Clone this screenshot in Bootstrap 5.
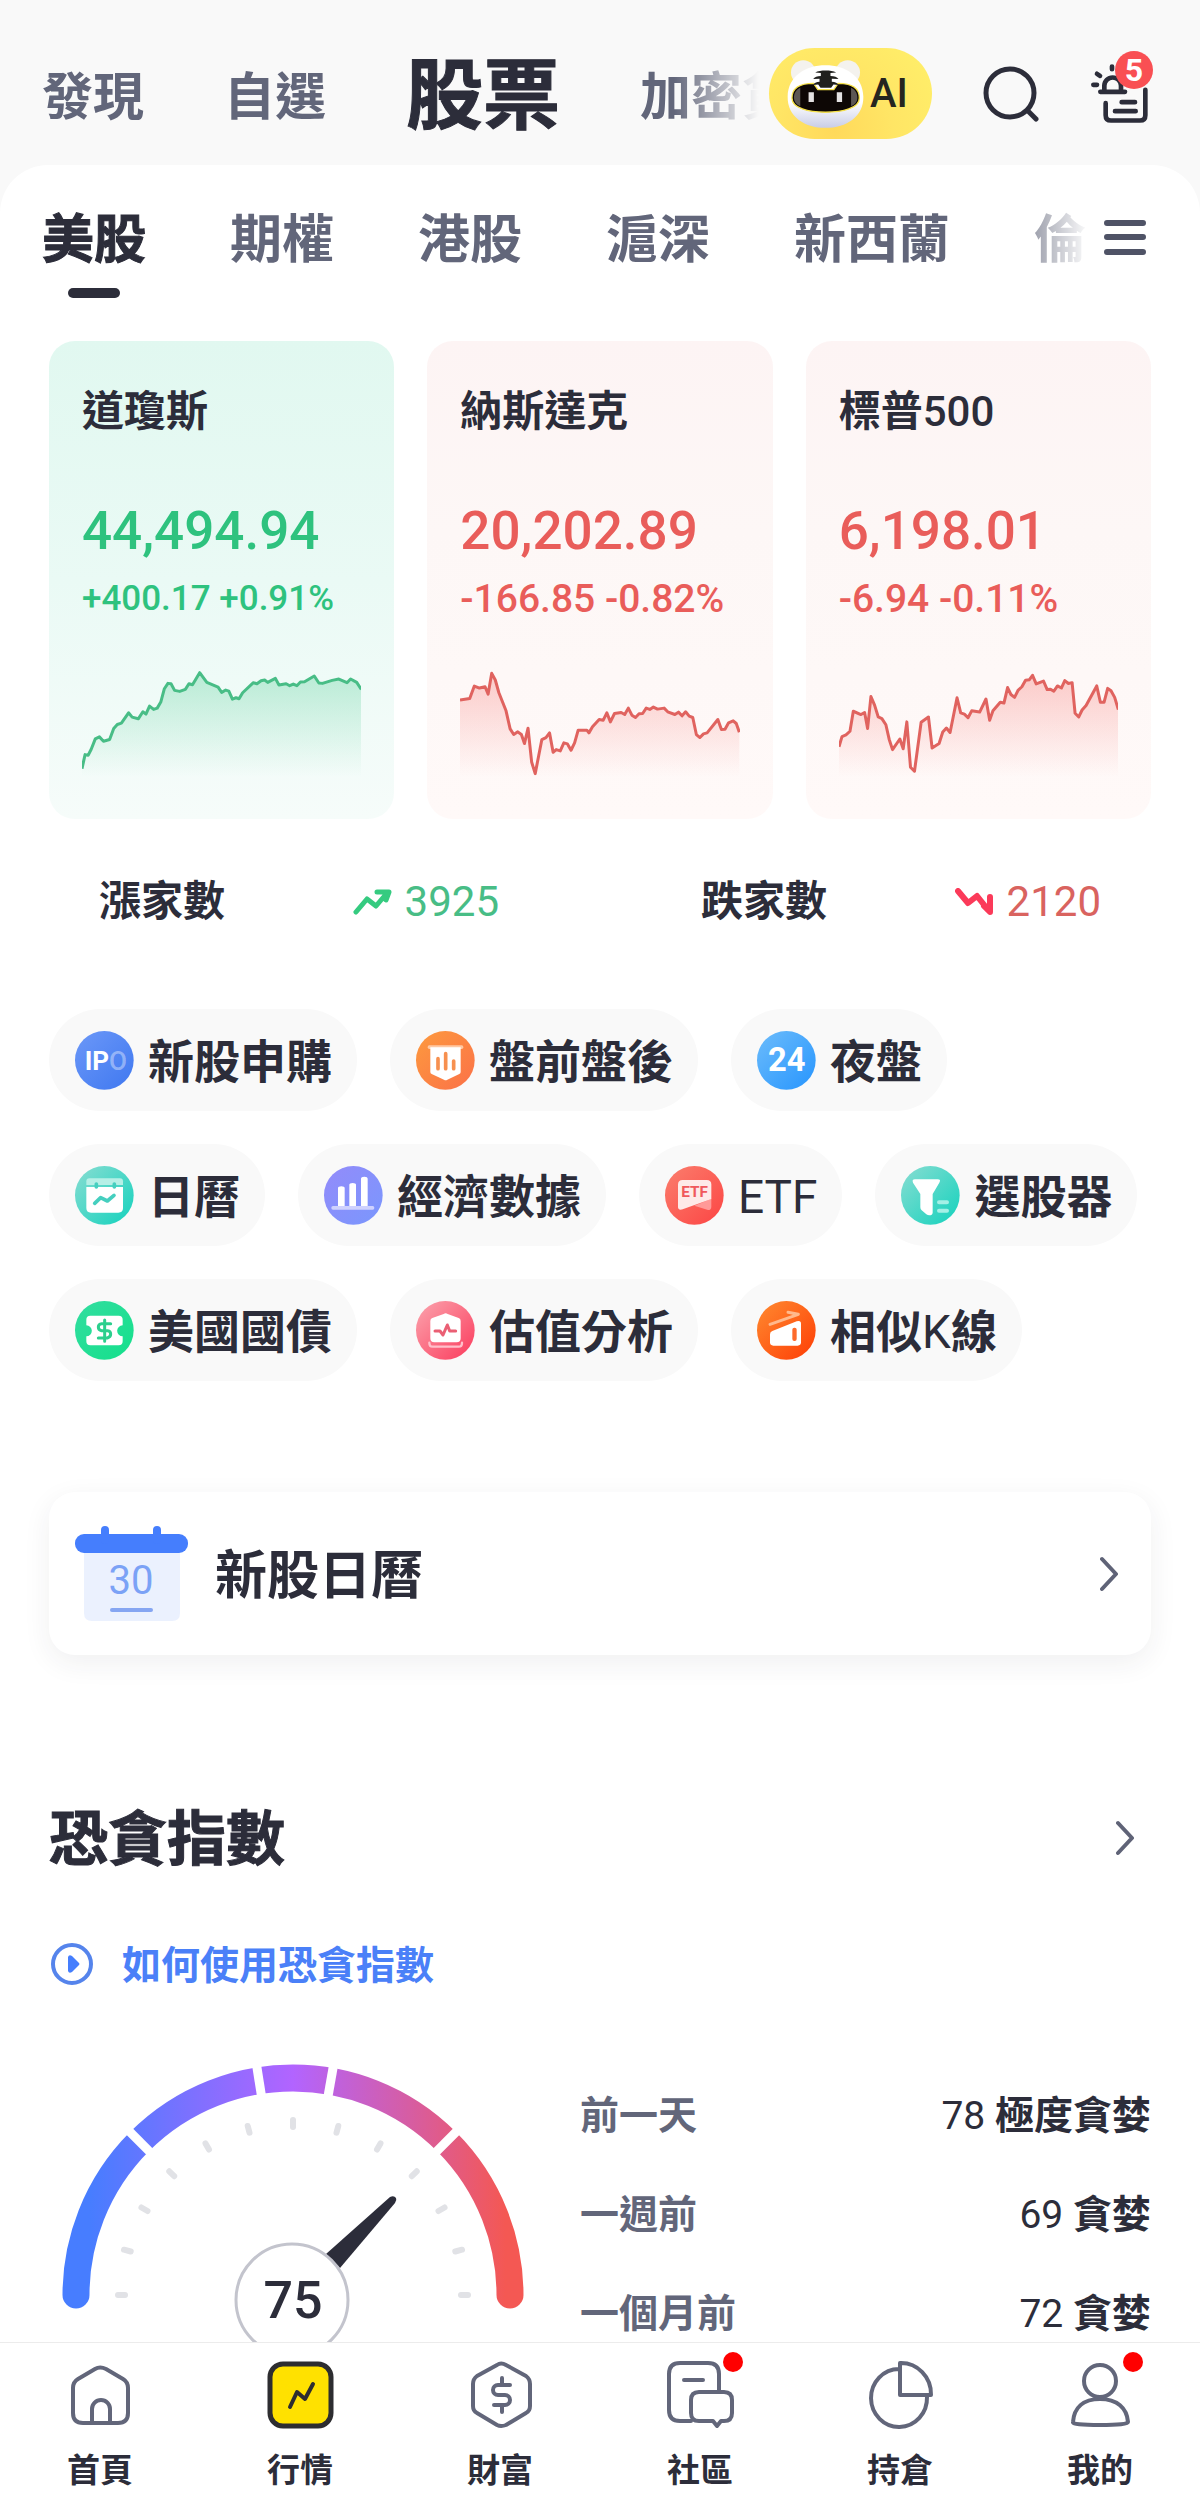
<!DOCTYPE html>
<html lang="zh-Hant">
<head>
<meta charset="utf-8">
<meta name="viewport" content="width=device-width, initial-scale=1">
<title>股票行情</title>
<link href="https://cdn.jsdelivr.net/npm/bootstrap@5.3.0/dist/css/bootstrap.min.css" rel="stylesheet">
<style>
  :root { --ink: #2c2d3a; --soft: #62667a; --up: #2ec27e; --down: #e95d5a; --blue: #4a80f8; }
  body { background: #f9f9f9; color: var(--ink); font-family: Roboto, "Noto Sans CJK TC", sans-serif; font-weight: 700; }
  a { color: inherit; text-decoration: none; }
  svg { display: block; flex: none; }
  .line { fill: none; stroke-linecap: round; stroke-linejoin: round; }
  .latin { font-weight: 400; }
  .latin-medium { font-weight: 500; }
  .heavy { -webkit-text-stroke: 1px currentColor; }

  .top-bar { padding: 48px 51px 26px 42px; gap: 51px; }
  .top-scroll { gap: 80px; font-size: 51px; line-height: 83px; padding-top: 8px; color: var(--soft); margin-right: -51px;
    -webkit-mask-image: linear-gradient(to right, #000 calc(100% - 95px), transparent calc(100% - 10px)); mask-image: linear-gradient(to right, #000 calc(100% - 95px), transparent calc(100% - 10px)); }
  .top-scroll .current { font-size: 77px; color: var(--ink); }
  .ai-pill { height: 91px; width: 163px; padding: 0 0 0 18px; gap: 6px; border: 0; border-radius: 46px; font-size: 40px; font-weight: 500; color: #26251f;
    background: radial-gradient(circle at 40% 90%, #ffd95a 0, #ffe565 45%, #fff06a 100%); }
  .plain-btn { border: 0; background: none; padding: 0; }
  .count-badge { position: absolute; left: 24px; top: -12px; width: 38px; height: 38px; border-radius: 50%; background: #f94f53; color: #fff; font-size: 32px; font-weight: 700; line-height: 38px; text-align: center; }

  .sheet { background: #fff; border-radius: 48px 48px 0 0; padding-bottom: 150px; }
  .tab-row { padding: 38px 54px 43px 42px; }
  .tab-scroll { gap: 84px; font-size: 52px; line-height: 70px; padding-top: 3px; color: var(--soft);
    -webkit-mask-image: linear-gradient(to right, #000 calc(100% - 105px), transparent calc(100% - 14px)); mask-image: linear-gradient(to right, #000 calc(100% - 105px), transparent calc(100% - 14px)); }
  .tab-scroll .current { color: var(--ink); }
  .tab-scroll .current::after { content: ""; display: block; width: 52px; height: 10px; border-radius: 5px; background: var(--ink); margin: 12px auto 0; }
  .menu-btn { height: 70px; }

  .page-pad { padding: 0 49px; }
  .index-row { gap: 33px; }
  .index-card { flex: 1 1 0; min-width: 0; border-radius: 26px; padding: 42px 33px; }
  .index-card.rise { background: linear-gradient(#e1f8f0, #eafaf5 50%, #f6fcfa); color: var(--up); }
  .index-card.fall { background: linear-gradient(#fdf4f4, #fdf7f6 40%, #fff9f8); color: var(--down); }
  .index-name { font-size: 42px; line-height: 58px; color: var(--ink); }
  .index-value { font-size: 53px; line-height: 64px; font-weight: 500; margin-top: 58px; }
  .index-change { font-size: 39px; line-height: 48px; font-weight: 500; margin-top: 12px; white-space: nowrap; }
  .rise .index-change { font-size: 35px; }
  .spark { width: 100%; height: 107px; margin-top: 47px; }
  .spark .stroke { fill: none; stroke-width: 3; vector-effect: non-scaling-stroke; stroke-linejoin: round; }

  .breadth { margin-top: 59px; padding: 0 50px; gap: 202px; font-size: 42px; line-height: 48px; }
  .breadth .num { gap: 13px; font-weight: 400; }

  .chips { margin-top: 83px; gap: 33px; }
  .chip { height: 102px; border-radius: 51px; background: #f9f9f9; padding: 0 25px 0 26px; gap: 14px; font-size: 46px; line-height: 60px; }
  .chip > span { padding-top: 4px; }

  .calendar-card { margin-top: 111px; height: 163px; border-radius: 26px; background: #fff; box-shadow: 0 8px 28px rgba(40, 40, 60, .07); padding: 0 33px 0 26px; font-size: 52px; gap: 26px; }
  .calendar-card > span { padding-top: 6px; }
  .section-head { margin-top: 143px; padding-right: 17px; }
  .section-head h2 { font-size: 59px; line-height: 76px; padding-top: 4px; font-weight: 700; }
  .how-to { margin-top: 58px; gap: 29px; font-size: 39px; line-height: 56px; color: var(--blue); padding-left: 2px; }
  .how-to > span { padding-top: 2px; margin-bottom: -2px; }

  .gauge-row { margin-top: 68px; }
  .gauge { width: 490px; margin-right: 41px; }
  .history { margin: 6px 0 0; font-size: 39px; line-height: 48px; }
  .history th, .history td { height: 99px; padding: 0; vertical-align: middle; }
  .history th { color: var(--soft); font-weight: 700; }

  .dock { height: 170px; background: #fff; border-top: 1px solid #ececec; padding-top: 17px; font-size: 33px; line-height: 40px; }
  .dock a { flex: 1 1 0; gap: 23px; }
  .dock svg { width: 68px; height: 68px; overflow: visible; stroke: var(--soft); stroke-width: 4; }
  .red-dot { position: absolute; left: 57px; top: -8px; width: 20px; height: 20px; border-radius: 50%; background: #f00; }
</style>
</head>
<body>

<header class="top-bar d-flex align-items-center">
  <nav class="top-scroll d-flex flex-fill overflow-hidden text-nowrap" style="min-width:0" aria-label="主分類">
    <a href="#">發現</a><a href="#">自選</a><a href="#" class="current heavy" aria-current="page">股票</a><a href="#">加密貨</a>
  </nav>
  <button class="ai-pill d-flex align-items-center flex-shrink-0" type="button">
    <svg width="77" height="70" viewBox="145 90 232 210" aria-hidden="true">
      <defs>
        <linearGradient id="furr" x1="0" y1="0" x2="0" y2="1"><stop offset=".6" stop-color="#fff"/><stop offset="1" stop-color="#c9cde6"/></linearGradient>
      </defs>
      <circle cx="194" cy="130" r="37" fill="#f4f2ee"/><circle cx="328" cy="130" r="37" fill="#f4f2ee"/>
      <path d="M261 108C320 108 374 140 375 203C376 262 325 297 261 297S146 262 147 203C148 140 202 108 261 108Z" fill="url(#furr)"/>
      <path d="M160 207C160 176 182 163 225 163L238 182H286L299 163C344 163 363 178 363 207C363 238 312 250 261 250S160 238 160 207Z" fill="#0d0705" stroke="#f6e24a" stroke-width="4"/>
      <path d="M166 207C166 190 174 181 185 176V232C172 226 166 218 166 207ZM357 207C357 190 349 181 338 176V232C351 226 357 218 357 207Z" fill="#5c5754"/>
      <path d="M230 130C245 122 278 122 293 130L276 132V141C288 141 296 144 300 150L280 149V158C290 158 298 162 301 168L285 166L278 176H246L239 166L223 168C226 162 234 158 243 158V149L224 150C228 144 236 141 247 141V132Z" fill="#20201e"/>
      <path d="M210 190h16v29h-16zM295 190h16v29h-16z" fill="#e4e2e2"/>
    </svg>
    <span>AI</span>
  </button>
  <button class="plain-btn flex-shrink-0" type="button" aria-label="搜尋">
    <svg width="57" height="57" viewBox="0 0 57 57" class="line" stroke="#2c2d3a" stroke-width="5"><circle cx="27" cy="28" r="24"/><path d="M45 46L53 54"/></svg>
  </button>
  <button class="plain-btn position-relative flex-shrink-0" type="button" aria-label="早報">
    <svg width="58" height="61" viewBox="1056 100 174 182" class="line" stroke="#2c2d3a" stroke-width="14"><path d="M1100 220V256Q1100 272 1116 272H1203Q1219 272 1219 256V180M1148 217H1188M1128 244H1190M1084 186H1158M1096 184V168A25 25 0 0 1 1146 168V184M1063 165H1074M1074 132L1083 138M1119 110V118"/></svg>
    <span class="count-badge">5</span>
  </button>
</header>

<main class="sheet">
  <div class="tab-row d-flex align-items-start">
    <nav class="tab-scroll d-flex flex-fill overflow-hidden text-nowrap" style="min-width:0" aria-label="市場">
      <a href="#" class="current heavy" aria-current="page">美股</a><a href="#">期權</a><a href="#">港股</a><a href="#">滬深</a><a href="#">新西蘭</a><a href="#">倫</a>
    </nav>
    <button class="plain-btn menu-btn d-flex align-items-center flex-shrink-0" type="button" aria-label="選單">
      <svg width="42" height="36" viewBox="0 0 42 36" class="line" stroke="#4f5366" stroke-width="6"><path d="M3 3H39M3 17H39M3 32H39"/></svg>
    </button>
  </div>

  <div class="page-pad">
    <section class="index-row d-flex" aria-label="指數">
      <a href="#" class="index-card rise">
        <div class="index-name">道瓊斯</div>
        <div class="index-value">44,494.94</div>
        <div class="index-change">+400.17 +0.91%</div>
        <svg class="spark" viewBox="162 1050 546 320" preserveAspectRatio="none" aria-hidden="true">
          <defs><linearGradient id="gUp" x1="0" y1="0" x2="0" y2="1"><stop stop-color="#2ec27e" stop-opacity=".28"/><stop offset="1" stop-color="#2ec27e" stop-opacity="0"/></linearGradient></defs>
          <path fill="url(#gUp)" d="M162 1345L168 1303L174 1305L180 1287L188 1256L196 1250L204 1263L216 1258L224 1225L231 1213L239 1209L253 1178L260 1191L272 1196L281 1175L287 1182L294 1158L302 1168L309 1164L316 1146L323 1106L330 1090L336 1091L343 1111L353 1114L364 1108L371 1091L378 1094L392 1058L406 1087L428 1101L435 1117L443 1110L449 1113L456 1137L463 1133L469 1136L476 1118L497 1088L504 1091L512 1082L519 1080L525 1087L540 1075L547 1095L561 1091L568 1097L575 1092L582 1097L589 1086L597 1085L616 1068L625 1089L632 1090L651 1081L664 1077L680 1088L687 1077L699 1087L708 1108V1370H162Z"/>
          <path class="stroke" stroke="#48bd86" d="M162 1345L168 1303L174 1305L180 1287L188 1256L196 1250L204 1263L216 1258L224 1225L231 1213L239 1209L253 1178L260 1191L272 1196L281 1175L287 1182L294 1158L302 1168L309 1164L316 1146L323 1106L330 1090L336 1091L343 1111L353 1114L364 1108L371 1091L378 1094L392 1058L406 1087L428 1101L435 1117L443 1110L449 1113L456 1137L463 1133L469 1136L476 1118L497 1088L504 1091L512 1082L519 1080L525 1087L540 1075L547 1095L561 1091L568 1097L575 1092L582 1097L589 1086L597 1085L616 1068L625 1089L632 1090L651 1081L664 1077L680 1088L687 1077L699 1087L708 1108"/>
        </svg>
      </a>
      <a href="#" class="index-card fall">
        <div class="index-name">納斯達克</div>
        <div class="index-value">20,202.89</div>
        <div class="index-change">-166.85 -0.82%</div>
        <svg class="spark" viewBox="902 1050 546 320" preserveAspectRatio="none" aria-hidden="true">
          <defs><linearGradient id="gDown" x1="0" y1="0" x2="0" y2="1"><stop stop-color="#f4605c" stop-opacity=".3"/><stop offset="1" stop-color="#f4605c" stop-opacity="0"/></linearGradient></defs>
          <path fill="url(#gDown)" d="M902 1140L921 1135L930 1098L940 1104L951 1100L957 1122L964 1060L971 1080L978 1118L992 1172L1000 1226L1007 1243L1015 1235L1022 1243L1028 1270L1035 1224L1042 1325L1049 1360L1056 1305L1062 1258L1070 1252L1077 1238L1084 1296L1090 1288L1098 1292L1105 1268L1112 1271L1119 1290L1126 1268L1133 1230L1150 1230L1154 1238L1161 1220L1174 1198L1182 1200L1189 1178L1196 1205L1204 1180L1217 1177L1224 1183L1231 1164L1238 1185L1245 1192L1252 1181L1259 1180L1266 1164L1273 1168L1280 1161L1288 1167L1301 1164L1308 1175L1322 1183L1329 1176L1336 1187L1343 1175L1350 1188L1357 1192L1364 1243L1371 1252L1378 1241L1385 1238L1406 1198L1413 1228L1420 1227L1427 1208L1436 1202L1442 1210L1448 1236V1370H902Z"/>
          <path class="stroke" stroke="#e0635f" d="M902 1140L921 1135L930 1098L940 1104L951 1100L957 1122L964 1060L971 1080L978 1118L992 1172L1000 1226L1007 1243L1015 1235L1022 1243L1028 1270L1035 1224L1042 1325L1049 1360L1056 1305L1062 1258L1070 1252L1077 1238L1084 1296L1090 1288L1098 1292L1105 1268L1112 1271L1119 1290L1126 1268L1133 1230L1150 1230L1154 1238L1161 1220L1174 1198L1182 1200L1189 1178L1196 1205L1204 1180L1217 1177L1224 1183L1231 1164L1238 1185L1245 1192L1252 1181L1259 1180L1266 1164L1273 1168L1280 1161L1288 1167L1301 1164L1308 1175L1322 1183L1329 1176L1336 1187L1343 1175L1350 1188L1357 1192L1364 1243L1371 1252L1378 1241L1385 1238L1406 1198L1413 1228L1420 1227L1427 1208L1436 1202L1442 1210L1448 1236"/>
        </svg>
      </a>
      <a href="#" class="index-card fall">
        <div class="index-name">標普<span class="latin-medium">500</span></div>
        <div class="index-value">6,198.01</div>
        <div class="index-change">-6.94 -0.11%</div>
        <svg class="spark" viewBox="174 857 840 262" preserveAspectRatio="none" aria-hidden="true">
          <path fill="url(#gDown)" d="M174 1045L183 1020L195 1016L207 1007L217 958L240 966L251 961L260 1000L270 922L281 943L292 972L303 976L315 991L325 1027L335 1052L357 1026L367 1050L378 984L389 1095L401 1105L411 1045L421 985L443 972L454 1048L475 1037L486 1009L497 999L508 1010L529 925L540 962L551 965L562 974L573 957L597 960L616 928L627 980L637 957L659 936L670 938L681 900L691 917L702 924L713 906L724 898L735 882L746 881L756 870L767 891L789 884L800 905L810 904L820 909L831 896L843 901L853 883L864 890L875 888L884 963L895 972L905 955L917 944L949 896L960 936L971 936L982 902L992 908L1003 924L1014 954V1119H174Z"/>
          <path class="stroke" stroke="#e0635f" d="M174 1045L183 1020L195 1016L207 1007L217 958L240 966L251 961L260 1000L270 922L281 943L292 972L303 976L315 991L325 1027L335 1052L357 1026L367 1050L378 984L389 1095L401 1105L411 1045L421 985L443 972L454 1048L475 1037L486 1009L497 999L508 1010L529 925L540 962L551 965L562 974L573 957L597 960L616 928L627 980L637 957L659 936L670 938L681 900L691 917L702 924L713 906L724 898L735 882L746 881L756 870L767 891L789 884L800 905L810 904L820 909L831 896L843 901L853 883L864 890L875 888L884 963L895 972L905 955L917 944L949 896L960 936L971 936L982 902L992 908L1003 924L1014 954"/>
        </svg>
      </a>
    </section>

    <section class="breadth d-flex" aria-label="漲跌家數">
      <div class="d-flex flex-fill justify-content-between align-items-center">
        <span>漲家數</span>
        <span class="num d-flex align-items-center" style="color:#48bd86"><svg width="39" height="26" viewBox="0 0 39 26" class="line" stroke="#35cb80" stroke-width="5"><path d="M3 23L14 10L23 17L34 4M24 3H36L33 11"/></svg>3925</span>
      </div>
      <div class="d-flex flex-fill justify-content-between align-items-center">
        <span>跌家數</span>
        <span class="num d-flex align-items-center" style="color:#d9635f"><svg width="39" height="28" viewBox="0 0 39 28" class="line" stroke="#fb3a59" stroke-width="6"><path d="M3 3L13 15L22 8L34 23M35 9V24L29 18"/></svg>2120</span>
      </div>
    </section>

    <nav class="chips d-flex flex-wrap" aria-label="工具">
      <a href="#" class="chip d-flex align-items-center">
        <svg width="59" height="59" viewBox="0 0 177 177"><defs><linearGradient id="c1" x1="0" y1="0" x2="1" y2="1"><stop stop-color="#6c98f8"/><stop offset="1" stop-color="#3f78f0"/></linearGradient></defs><circle cx="88" cy="88" r="88" fill="url(#c1)"/><text x="29" y="116" font-size="78" font-weight="700" fill="#fff">IP<tspan font-weight="500" fill-opacity=".4">O</tspan></text></svg><span>新股申購</span></a>
      <a href="#" class="chip d-flex align-items-center">
        <svg width="59" height="59" viewBox="0 0 177 177"><defs><linearGradient id="c2" x1="0" y1="0" x2="1" y2="1"><stop stop-color="#fd9a3e"/><stop offset="1" stop-color="#fb7148"/></linearGradient></defs><circle cx="88" cy="88" r="88" fill="url(#c2)"/><rect x="35" y="43" width="107" height="11" rx="5" fill="#ffc9a3"/><path d="M43 49H134V123Q134 127 130 129L94 146Q89 149 84 146L47 129Q43 127 43 123Z" fill="#fff"/><path d="M66 83V113M89 68V113M113 90V113" class="line" stroke="#f7904f" stroke-width="11"/></svg><span>盤前盤後</span></a>
      <a href="#" class="chip d-flex align-items-center">
        <svg width="59" height="59" viewBox="0 0 177 177"><defs><linearGradient id="c3" x1="0" y1="0" x2="1" y2="1"><stop stop-color="#6cbcfb"/><stop offset="1" stop-color="#2795fe"/></linearGradient></defs><circle cx="88" cy="88" r="88" fill="url(#c3)"/><text x="89" y="120" font-size="98" font-weight="700" text-anchor="middle" fill="#fff">24</text></svg><span>夜盤</span></a>
      <a href="#" class="chip d-flex align-items-center">
        <svg width="59" height="59" viewBox="0 0 177 177"><defs><linearGradient id="c4" x1="0" y1="0" x2="1" y2="1"><stop offset=".1" stop-color="#7ddcd0"/><stop offset=".9" stop-color="#1fd3bf"/></linearGradient></defs><circle cx="88" cy="88" r="88" fill="url(#c4)"/><path d="M34 57V46Q34 37 43 37H135Q144 37 144 46V57Z" fill="#b6efe6"/><path d="M34 63H144V126Q144 140 130 140H48Q34 140 34 126Z" fill="#fff"/><path d="M64 54V63M118 54V63M59 112L77 95L97 105L117 88" class="line" stroke="#45cfbf" stroke-width="11"/></svg><span>日曆</span></a>
      <a href="#" class="chip d-flex align-items-center">
        <svg width="59" height="59" viewBox="0 0 177 177"><defs><linearGradient id="c5" x1="0" y1="0" x2="1" y2="1"><stop stop-color="#938bfa"/><stop offset="1" stop-color="#7a97fd"/></linearGradient></defs><circle cx="88" cy="88" r="88" fill="url(#c5)"/><path d="M42 122V66Q42 61 52 61T62 66V122ZM76 122V56Q76 51 86 51T96 56V122ZM111 122V38Q111 32 121 32T131 38V122Z" fill="#fff"/><rect x="22" y="120" width="129" height="11" rx="5" fill="#cfd2fe"/></svg><span>經濟數據</span></a>
      <a href="#" class="chip d-flex align-items-center">
        <svg width="59" height="59" viewBox="0 0 177 177"><defs><linearGradient id="c6" x1="0" y1="0" x2="1" y2="1"><stop stop-color="#fb7e6d"/><stop offset="1" stop-color="#fc4544"/></linearGradient></defs><circle cx="88" cy="88" r="88" fill="url(#c6)"/><path d="M88 119L139 98V122Q139 132 129 132Z" fill="#ff9a98"/><path d="M39 56Q39 42 53 42H125Q139 42 139 56V99L53 130Q39 134 39 122Z" fill="#feeae8"/><text x="89" y="93" font-size="46" font-weight="700" text-anchor="middle" fill="#f0595c">ETF</text></svg><span class="latin">ETF</span></a>
      <a href="#" class="chip d-flex align-items-center">
        <svg width="59" height="59" viewBox="0 0 177 177"><circle cx="88" cy="88" r="88" fill="url(#c4)"/><path d="M42 40H110Q121 40 115 50L95 84V140Q94 148 85 148Q80 148 76 145L62 133Q58 130 58 124V84L36 50Q32 40 42 40Z" fill="#fff"/><path d="M114 109H138M114 134H138" class="line" stroke="#a4f0e6" stroke-width="12"/></svg><span>選股器</span></a>
      <a href="#" class="chip d-flex align-items-center">
        <svg width="59" height="59" viewBox="0 0 177 177"><defs><linearGradient id="c8" x1="0" y1="0" x2="1" y2="1"><stop stop-color="#33dda0"/><stop offset="1" stop-color="#14e08b"/></linearGradient></defs><circle cx="88" cy="88" r="88" fill="url(#c8)"/><path d="M46 44H131Q143 44 143 56V73A16 16 0 0 0 143 106V121Q143 133 131 133H46Q34 133 34 121V106A16 16 0 0 0 34 73V56Q34 44 46 44Z" fill="#fff"/><path d="M107 68H80Q70 69 70 78T80 89H98Q107 90 107 99T97 111H70M89 57V121" class="line" stroke="#2ccf8d" stroke-width="9"/></svg><span>美國國債</span></a>
      <a href="#" class="chip d-flex align-items-center">
        <svg width="59" height="59" viewBox="0 0 177 177"><defs><linearGradient id="c9" x1="0" y1="0" x2="1" y2="1"><stop offset=".1" stop-color="#fb9aa6"/><stop offset="1" stop-color="#fb3b5c"/></linearGradient></defs><circle cx="88" cy="88" r="88" fill="url(#c9)"/><path d="M83 39Q89 35 95 39L128 51Q134 53 134 60V112Q134 124 122 124H55Q43 124 43 112V60Q43 53 49 51Z" fill="#fff"/><path d="M40 125Q40 137 50 137H128Q138 137 138 125" class="line" stroke="#ffc0ca" stroke-width="7"/><path d="M57 90H72L81 102L94 72L101 90H119" class="line" stroke="#ea5f74" stroke-width="9"/></svg><span>估值分析</span></a>
      <a href="#" class="chip d-flex align-items-center">
        <svg width="59" height="59" viewBox="0 0 177 177"><defs><linearGradient id="c10" x1="0" y1="0" x2="1" y2="1"><stop stop-color="#ff8a30"/><stop offset="1" stop-color="#fe3d05"/></linearGradient></defs><circle cx="88" cy="88" r="88" fill="url(#c10)"/><path d="M39 70L124 40L93 34" class="line" stroke="#ffb98c" stroke-width="9"/><path d="M46 90L119 61Q132 57 132 68V124Q132 134 122 134H49Q39 134 39 124V100Q39 93 46 90Z" fill="#fff"/><rect x="106" y="80" width="13" height="40" rx="6" fill="#fd6a2b"/></svg><span>相似<span class="latin">K</span>線</span></a>
    </nav>

    <a href="#" class="calendar-card d-flex align-items-center">
      <svg width="114" height="96" viewBox="0 0 114 96" aria-hidden="true"><path d="M9 20H105V87Q105 95 97 95H17Q9 95 9 87Z" fill="#ebf1fe"/><rect y="8" width="113" height="19" rx="9" fill="#457efd"/><path d="M30 4V14M82 4V14" class="line" stroke="#457efd" stroke-width="8"/><text x="56" y="68" font-size="40" font-weight="400" text-anchor="middle" fill="#7ba2f6">30</text><path d="M37 84H76" class="line" stroke="#86a6f2" stroke-width="4"/></svg>
      <span class="flex-fill">新股日曆</span>
      <svg width="18" height="36" viewBox="0 0 18 36" class="line" stroke="#5f6377" stroke-width="4"><path d="M2 3L16 18L2 33"/></svg>
    </a>

    <a href="#" class="section-head d-flex align-items-center">
      <h2 class="m-0 flex-fill heavy">恐貪指數</h2>
      <svg width="18" height="36" viewBox="0 0 18 36" class="line" stroke="#5f6377" stroke-width="4"><path d="M2 3L16 18L2 33"/></svg>
    </a>
    <a href="#" class="how-to d-flex align-items-center">
      <svg width="42" height="42" viewBox="0 0 42 42"><circle cx="21" cy="21" r="19" fill="none" stroke="#5584ec" stroke-width="4"/><path d="M17 14V28Q18 31 21 29L28 22Q29 21 28 20L21 13Q18 11 17 14Z" fill="#457efd"/></svg>
      <span>如何使用恐貪指數</span>
    </a>

    <section class="gauge-row d-flex align-items-start">
      <svg class="gauge" height="300" viewBox="0 0 490 300" role="img" aria-label="恐貪指數 75">
        <defs><linearGradient id="arc" gradientUnits="userSpaceOnUse" x1="13" y1="0" x2="475" y2="0"><stop offset=".06" stop-color="#477dff"/><stop offset=".5" stop-color="#b264ff"/><stop offset=".82" stop-color="#e05b8a"/><stop offset=".96" stop-color="#f45853"/></linearGradient></defs>
        <path d="M27 235A217 217 0 0 1 461 235" fill="none" stroke="url(#arc)" stroke-width="27" stroke-linecap="round"/>
        <g stroke="#fff" stroke-width="9">
          <path d="M244 35V-5" transform="rotate(-45 244 235)"/><path d="M244 35V-5" transform="rotate(-9 244 235)"/><path d="M244 35V-5" transform="rotate(10 244 235)"/><path d="M244 35V-5" transform="rotate(45 244 235)"/>
        </g>
        <g id="ticks" class="line" stroke="#e1e2e6" stroke-width="6"></g>
        <path d="M277 194L341 137Q345 135 347 138Q348 140 346 143L291 208Z" fill="#2c2d3a"/>
        <circle cx="243" cy="240" r="56" fill="#fff" stroke="#c3c4cd" stroke-width="3"/>
        <text x="244" y="258" font-size="52" font-weight="500" text-anchor="middle" fill="#2c2d3a">75</text>
      </svg>
      <table class="history flex-fill">
        <tbody>
          <tr><th scope="row">前一天</th><td class="text-end"><span class="latin">78</span> 極度貪婪</td></tr>
          <tr><th scope="row">一週前</th><td class="text-end"><span class="latin">69</span> 貪婪</td></tr>
          <tr><th scope="row">一個月前</th><td class="text-end"><span class="latin">72</span> 貪婪</td></tr>
        </tbody>
      </table>
    </section>
  </div>
</main>

<nav class="dock fixed-bottom d-flex" aria-label="底部導覽">
  <a href="#" class="d-flex flex-column align-items-center"><svg viewBox="0 0 68 68" class="line"><path d="M29 9L12 19Q7 22 7 28V53Q7 63 17 63H52Q62 63 62 53V28Q62 22 57 19L40 9Q34 6 29 9ZM26 63V49A9 9 0 0 1 44 49V63"/></svg>首頁</a>
  <a href="#" class="d-flex flex-column align-items-center" aria-current="page"><svg viewBox="0 0 68 68" class="line" style="stroke:#2d2d30"><rect x="4" y="4" width="61" height="62" rx="13" fill="#ffe100" stroke-width="5"/><path d="M24 47L31 32L39 39L47 24"/></svg>行情</a>
  <a href="#" class="d-flex flex-column align-items-center"><svg viewBox="0 0 68 68" class="line"><path d="M31 5L11 16Q7 19 7 24V46Q7 51 11 53L31 65Q35 67 40 65L60 53Q64 51 64 46V24Q64 19 60 16L40 5Q35 2 31 5ZM44 25H32A5 5 0 0 0 32 35H39A5 5 0 0 1 39 45H28M36 18V25M36 45V52"/></svg>財富</a>
  <a href="#" class="d-flex flex-column align-items-center"><span class="position-relative"><svg viewBox="0 0 68 68" class="line"><path d="M25 61H14Q3 61 3 50V14Q3 3 14 3H42Q53 3 53 14V32M18 20H37"/><path d="M33 32H58Q66 32 66 40V53Q66 61 58 61H55L51 66L47 61H33Q25 61 25 53V40Q25 32 33 32Z"/></svg><span class="red-dot"></span></span>社區</a>
  <a href="#" class="d-flex flex-column align-items-center"><svg viewBox="0 0 68 68" class="line"><path d="M33 9A28 29 0 1 0 61 37M34 35V3A30 31 0 0 1 65 35Z"/></svg>持倉</a>
  <a href="#" class="d-flex flex-column align-items-center"><span class="position-relative"><svg viewBox="0 0 68 68" class="line"><circle cx="34" cy="21" r="16"/><path d="M7 62C8 48 17 39 34 39S61 48 62 62Q62 65 34 65T7 62Z"/></svg><span class="red-dot"></span></span>我的</a>
</nav>

<script>
  // thirteen tick marks, one every 15 degrees
  const ticks = document.getElementById('ticks');
  for (let a = -90; a <= 90; a += 15) {
    const p = document.createElementNS('http://www.w3.org/2000/svg', 'path');
    p.setAttribute('d', 'M244 60V67');
    p.setAttribute('transform', `rotate(${a} 244 235)`);
    ticks.appendChild(p);
  }
</script>
<script src="https://cdn.jsdelivr.net/npm/bootstrap@5.3.0/dist/js/bootstrap.bundle.min.js"></script>
</body>
</html>
